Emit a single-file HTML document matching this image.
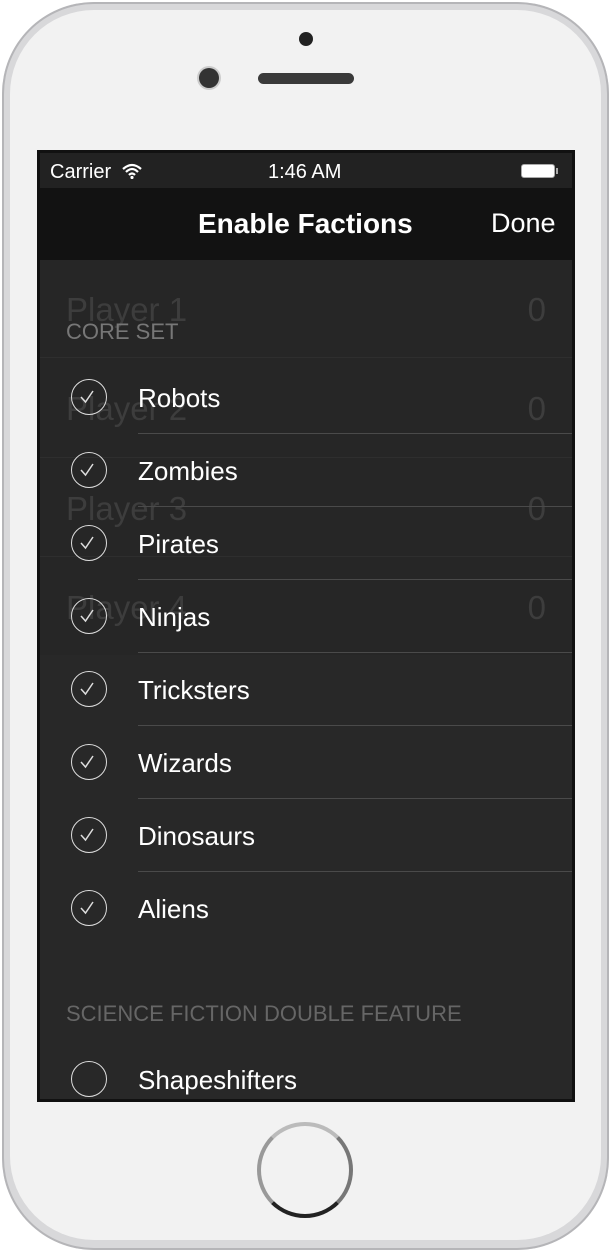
<!DOCTYPE html><html><head><style>
body{margin:0;width:613px;height:1255px;overflow:hidden;background:#fff;font-family:"Liberation Sans",sans-serif}
.phone{position:absolute;left:2px;top:2px;width:607px;height:1248px;border-radius:92px;background:#d8d8da;box-shadow:inset 0 0 0 2px #b5b5b8}
.inner{position:absolute;left:8px;top:8px;right:8px;bottom:10px;border-radius:84px;background:#f2f2f2}
.screen{position:absolute;left:37px;top:150px;width:538px;height:952px;background:#111;overflow:hidden}
.abs{position:absolute}
.row{position:absolute;left:3px;width:532px;height:73px}
.row .c{position:absolute;left:31px;top:18px;width:36px;height:36px;border:1.5px solid #ddd;border-radius:50%;box-sizing:border-box}
.row span{position:absolute;left:98px;top:22px;color:#fff;font-size:26px}
.sep{position:absolute;left:98px;right:0;bottom:0;height:1px;background:#4a4a4a}
.ghost{position:absolute;left:29px;color:#3d3d3d;font-size:33px}
.gz{position:absolute;right:29px;color:#3d3d3d;font-size:33px}
</style></head><body>
<div class="phone"><div class="inner"></div></div>
<div class="abs" style="left:299px;top:32px;width:14px;height:14px;border-radius:50%;background:#222"></div>
<div class="abs" style="left:199px;top:68px;width:20px;height:20px;border-radius:50%;background:#333;box-shadow:0 0 0 2px #ccc"></div>
<div class="abs" style="left:258px;top:73px;width:96px;height:11px;border-radius:6px;background:#3a3a3a"></div>
<div class="abs" style="left:257px;top:1122px;width:96px;height:96px;border-radius:50%;border:4px solid #888;box-sizing:border-box;background:#f2f2f2;border-color:#bbb #777 #222 #999"></div>
<div class="screen">
<div class="abs" style="left:3px;top:3px;width:532px;height:35px;background:#222"></div>
<div class="abs" style="left:13px;top:11px;color:#fff;font-size:20px">Carrier</div>
<svg class="abs" style="left:84px;top:13px" width="22" height="16" viewBox="0 0 22 16"><path d="M2 6Q11-2 20 6M5 9Q11 3 17 9M8 12Q11 9 14 12" stroke="#fff" stroke-width="2.2" fill="none"/><circle cx="11" cy="14.5" r="1.6" fill="#fff"/></svg>
<div class="abs" style="left:231px;top:11px;color:#fff;font-size:20px">1:46 AM</div>
<div class="abs" style="left:484px;top:14px;width:34px;height:14px;border:1.5px solid #aaa;border-radius:3px;background:#fff;box-sizing:border-box"></div>
<div class="abs" style="left:519px;top:18px;width:2px;height:6px;background:#aaa"></div>
<div class="abs" style="left:3px;top:38px;width:532px;height:72px;background:#121212"></div>
<div class="abs" style="left:161px;top:58px;color:#fff;font-size:28px;font-weight:bold">Enable Factions</div>
<div class="abs" style="left:454px;top:58px;color:#fff;font-size:27px">Done</div>
<div class="abs" style="left:3px;top:110px;width:532px;height:842px;background:#282828"></div>
<div class="abs" style="left:3px;top:110px;width:532px;height:395px;background:#262626"></div>
<div class="abs" style="left:3px;top:207px;width:532px;height:1px;background:#2e2e2e"></div>
<div class="abs" style="left:3px;top:307px;width:532px;height:1px;background:#2e2e2e"></div>
<div class="abs" style="left:3px;top:406px;width:532px;height:1px;background:#2e2e2e"></div>
<div class="ghost" style="top:141px">Player 1</div><div class="gz" style="top:141px">0</div>
<div class="ghost" style="top:240px">Player 2</div><div class="gz" style="top:240px">0</div>
<div class="ghost" style="top:340px">Player 3</div><div class="gz" style="top:340px">0</div>
<div class="ghost" style="top:439px">Player 4</div><div class="gz" style="top:439px">0</div>
<div class="abs" style="left:29px;top:169px;color:#777;font-size:22px">CORE SET</div>
<div class="row" style="top:211px"><div class="c"></div><span>Robots</span><div class="sep"></div></div>
<div class="row" style="top:284px"><div class="c"></div><span>Zombies</span><div class="sep"></div></div>
<div class="row" style="top:357px"><div class="c"></div><span>Pirates</span><div class="sep"></div></div>
<div class="row" style="top:430px"><div class="c"></div><span>Ninjas</span><div class="sep"></div></div>
<div class="row" style="top:503px"><div class="c"></div><span>Tricksters</span><div class="sep"></div></div>
<div class="row" style="top:576px"><div class="c"></div><span>Wizards</span><div class="sep"></div></div>
<div class="row" style="top:649px"><div class="c"></div><span>Dinosaurs</span><div class="sep"></div></div>
<div class="row" style="top:722px"><div class="c"></div><span>Aliens</span></div>
<svg class="abs" style="left:34px;top:229px" width="30" height="540">
<g stroke="#ddd" stroke-width="1.5" fill="none"><path d="M10 18l4.5 5L22 12"/><path d="M10 91l4.5 5L22 85"/><path d="M10 164l4.5 5L22 158"/><path d="M10 237l4.5 5L22 231"/><path d="M10 310l4.5 5L22 304"/><path d="M10 383l4.5 5L22 377"/><path d="M10 456l4.5 5L22 450"/><path d="M10 529l4.5 5L22 523"/></g></svg>
<div class="abs" style="left:29px;top:851px;color:#666;font-size:22px">SCIENCE FICTION DOUBLE FEATURE</div>
<div class="row" style="top:893px"><div class="c"></div><span>Shapeshifters</span></div>
<div class="abs" style="left:0;top:949px;width:538px;height:3px;background:#111"></div>
</div>
</body></html>
